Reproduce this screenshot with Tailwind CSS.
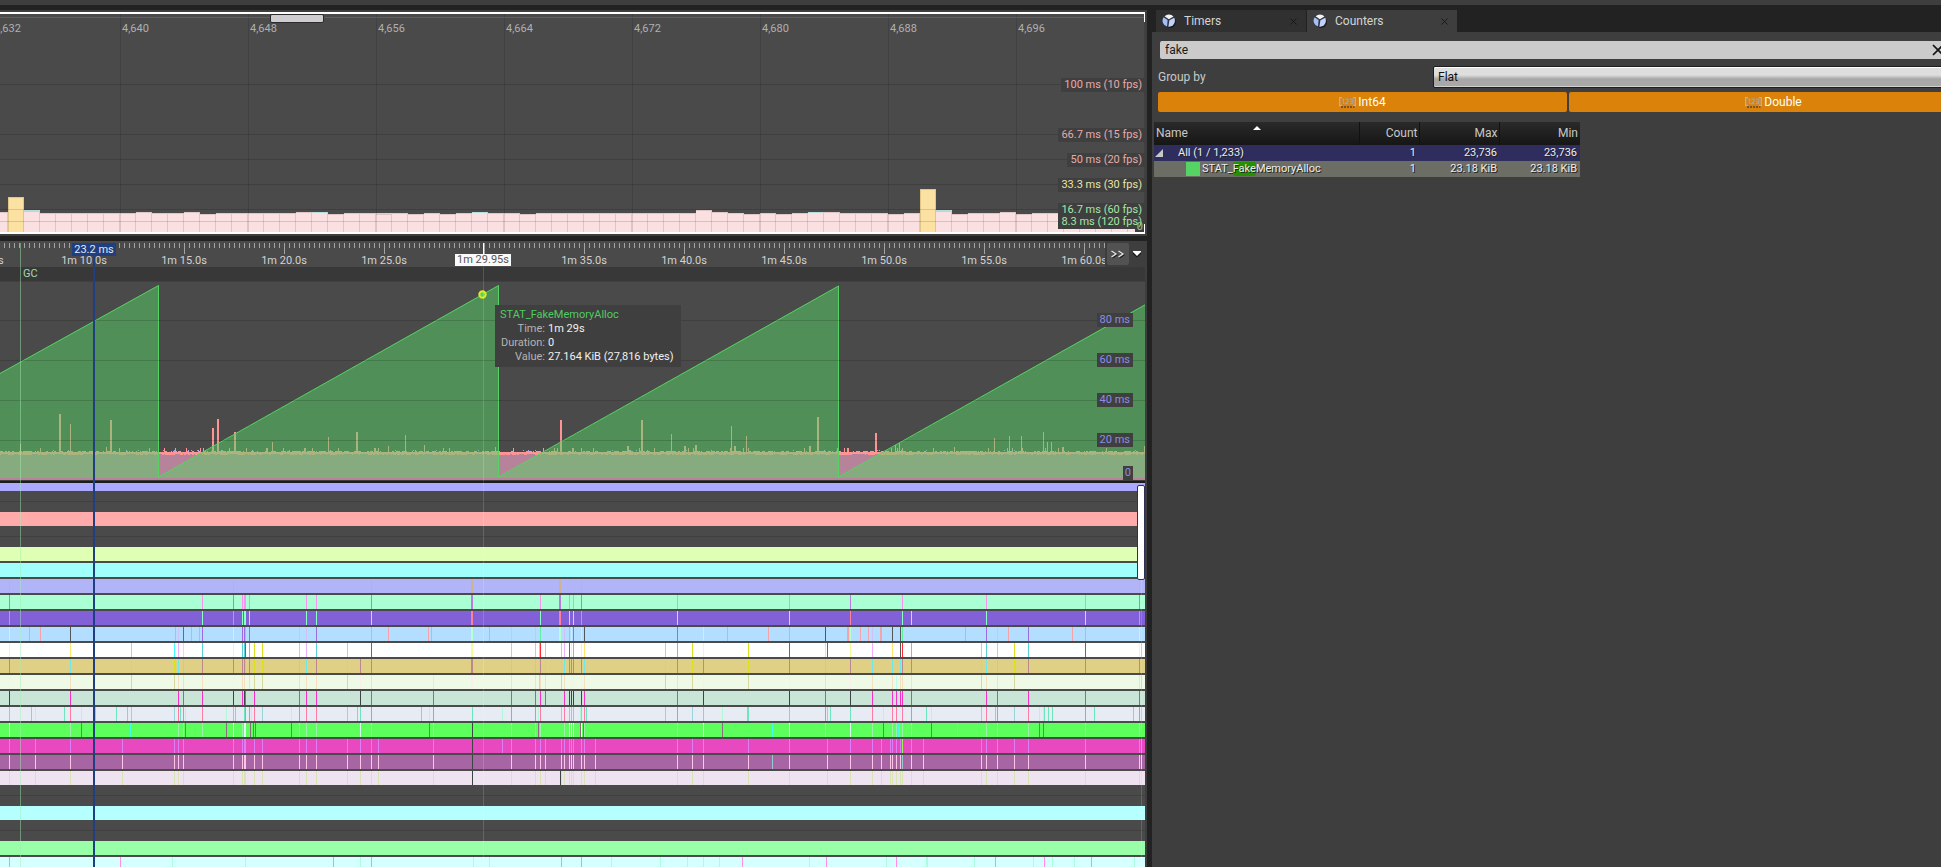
<!DOCTYPE html>
<html lang="en">
<head>
<meta charset="utf-8">
<title>Timing Insights</title>
<script src="https://cdn.jsdelivr.net/npm/@tailwindcss/browser@4"></script>
</head>
<body class="h-screen overflow-hidden bg-[#3e3e3e] font-[Roboto,'Liberation_Sans',sans-serif] text-[11px] leading-[14px] text-[#c8c8c8]">
<div class="flex h-full flex-col">
  <div class="h-[5px] shrink-0"></div>
  <div class="h-[5px] shrink-0 bg-[#222222]"></div>
  <div class="grid min-h-0 flex-1 grid-cols-[1147fr_5px_789fr]">

    <main class="flex min-w-0 flex-col overflow-hidden pr-[2px]">
      <section aria-label="Frames" class="relative mt-[2px] h-[222px] shrink-0 overflow-hidden border-y-2 border-white bg-[#4a4a4a]">
        <svg id="frames" class="absolute inset-0 h-full w-full" shape-rendering="crispEdges"></svg>
        <div class="absolute left-[270px] top-0 h-[9px] w-[54px] rounded-[2px] border border-[#2c2c2c] bg-[#cfcdd0]"></div>
        <div class="-ml-[6px] flex pt-[8px] text-[#b0b0b0]">
          <span class="w-32 shrink-0">4,632</span><span class="w-32 shrink-0">4,640</span><span class="w-32 shrink-0">4,648</span><span class="w-32 shrink-0">4,656</span><span class="w-32 shrink-0">4,664</span><span class="w-32 shrink-0">4,672</span><span class="w-32 shrink-0">4,680</span><span class="w-32 shrink-0">4,688</span><span class="w-32 shrink-0">4,696</span>
        </div>
        <i class="absolute bottom-0 right-0 h-[10px] w-[10px] bg-[#3f3f3f]"></i>
        <span class="absolute right-0 top-[64px] bg-[#3f3f3f] px-[3px] text-[#e8aaaa]">100 ms (10 fps)</span>
        <span class="absolute right-0 top-[114px] bg-[#3f3f3f] px-[3px] text-[#e8aaaa]">66.7 ms (15 fps)</span>
        <span class="absolute right-0 top-[139px] bg-[#3f3f3f] px-[3px] text-[#e8aaaa]">50 ms (20 fps)</span>
        <span class="absolute right-0 top-[164px] bg-[#3f3f3f] px-[3px] text-[#e6e6a6]">33.3 ms (30 fps)</span>
        <span class="absolute right-0 top-[189px] bg-[#3f3f3f] px-[3px] text-[#a6e6a6]">16.7 ms (60 fps)</span>
        <span class="absolute right-0 top-[201px] bg-[#3f3f3f] px-[3px] text-[#a6e6a6]">8.3 ms (120 fps)</span>
        <span class="absolute bottom-0 right-0 px-[2px] leading-[10px] text-[#90c890]">0</span>
        <i class="absolute right-0 top-0 h-[8px] w-px bg-white"></i>
        <i class="absolute bottom-0 right-0 h-[8px] w-px bg-white"></i>
      </section>
      <div class="mt-[2px] -mr-[2px] h-[5px] shrink-0 bg-[#222222]"></div>

      <section aria-label="Timing" class="relative flex min-h-0 flex-1 flex-col overflow-hidden bg-[#4a4a4a]">
        <div class="relative h-[26px] shrink-0">
          <svg id="ruler" class="absolute inset-0 h-full w-full" shape-rendering="crispEdges"></svg>
          <div class="-ml-[66px] flex pt-[13px] text-center leading-[13px] text-[#d2d2d2]">
            <span class="w-[100px] shrink-0">1m 5.0s</span><span class="w-[100px] shrink-0">1m 10.0s</span><span class="w-[100px] shrink-0">1m 15.0s</span><span class="w-[100px] shrink-0">1m 20.0s</span><span class="w-[100px] shrink-0">1m 25.0s</span><span class="w-[100px] shrink-0"></span><span class="w-[100px] shrink-0">1m 35.0s</span><span class="w-[100px] shrink-0">1m 40.0s</span><span class="w-[100px] shrink-0">1m 45.0s</span><span class="w-[100px] shrink-0">1m 50.0s</span><span class="w-[100px] shrink-0">1m 55.0s</span><span class="w-[100px] shrink-0">1m 60.0s</span>
          </div>
          <div class="absolute inset-y-0 right-0 flex w-[40px] items-start gap-[3px] bg-[#3e3e3e] pl-[2px] pt-[2px]">
            <button aria-label="Auto-scroll" class="flex h-[22px] w-[22px] items-center justify-center rounded-[2px] bg-[#525252]">
              <svg width="14" height="9" fill="none"><path d="M1.500 2 6 5 1.500 8M8.500 2 13 5 8.500 8" stroke="#1c1c1c" stroke-width="1.200"/><path d="M.5 1 5 4 .5 7M7.500 1 12 4 7.500 7" stroke="#e8e8e8" stroke-width="1.300"/></svg>
            </button>
            <button aria-label="View options" class="flex h-[22px] items-center">
              <svg width="10" height="8"><path d="M1 2h8v2L5 7.500 1 4z" fill="#181818"/><path d="M1 1h8v1L5 6 1 2z" fill="#fff"/></svg>
            </button>
          </div>
        </div>
        <div class="h-[15px] shrink-0 border-b border-[#404040] bg-[#383838] pl-[23px] text-[#a0dca8]">GC</div>
        <div class="relative h-[199px] shrink-0 border-b border-[#3e3e3e]">
          <svg id="graph" class="absolute inset-0 h-full w-full"></svg>
          <span class="absolute right-[12px] top-[31px] bg-[#3f3f3f] px-[3px] text-[#8c8ce6]">80 ms</span>
          <span class="absolute right-[12px] top-[71px] bg-[#3f3f3f] px-[3px] text-[#8c8ce6]">60 ms</span>
          <span class="absolute right-[12px] top-[111px] bg-[#3f3f3f] px-[3px] text-[#8c8ce6]">40 ms</span>
          <span class="absolute right-[12px] top-[151px] bg-[#3f3f3f] px-[3px] text-[#8c8ce6]">20 ms</span>
          <span class="absolute right-[12px] top-[184px] bg-[#3f3f3f] px-[2px] text-[#8c8ce6]">0</span>
        </div>
        <div class="h-[2px] shrink-0 bg-[#1c1c1c]"></div>
        <div id="tracks" class="min-h-0 flex-1 overflow-hidden"></div>

        <i class="absolute bottom-0 left-[20px] top-[2px] w-px bg-[#a0f0b0]/45"></i>
        <i class="absolute bottom-0 left-[483px] top-[26px] w-px bg-white/15"></i>
        <i class="absolute bottom-0 left-[1141px] top-[338px] w-px bg-white/15"></i>
        <i class="absolute left-[483px] top-[2px] h-[12px] w-px bg-white"></i>
        <i class="absolute bottom-0 left-[93px] top-[15px] w-[2px] bg-[#1f3f80]"></i>
        <span class="absolute left-[72px] top-[2px] w-[44px] bg-[#1f3f80] text-center leading-[13px] text-[#e4e8f4]">23.2 ms</span>
        <span class="absolute left-[455px] top-[13px] w-[56px] bg-[#fafafa] text-center leading-[12px] text-[#555]">1m 29.95s</span>
        <div class="absolute right-0 top-[244px] h-[95px] w-[8px] rounded-[2px] border border-[#303050] bg-white"></div>

        <div role="tooltip" class="absolute left-[495px] top-[64px] bg-[#3f3f3f] px-[5px] py-[3px] pr-[7px] text-[#f0f0f0]">
          <div class="text-[#50cc60]">STAT_FakeMemoryAlloc</div>
          <dl class="grid grid-cols-[45px_auto] gap-x-[3px]">
            <dt class="text-right text-[#b4b4b4]">Time:</dt><dd>1m 29s</dd>
            <dt class="text-right text-[#b4b4b4]">Duration:</dt><dd>0</dd>
            <dt class="text-right text-[#b4b4b4]">Value:</dt><dd>27.164 KiB (27,816 bytes)</dd>
          </dl>
        </div>
      </section>
    </main>

    <div class="bg-[#222222]"></div>

    <aside class="flex min-w-0 flex-col overflow-hidden text-[12px]">
      <div role="tablist" class="flex h-[22px] shrink-0 gap-px bg-[#222222] pl-[4px] text-[#d4d4d4] [text-shadow:1px_1px_0_#111]">
        <div class="flex w-[150px] items-center bg-[#303030] pl-[6px] pr-[9px]">
          <button role="tab" class="flex flex-1 items-center gap-[8px] text-left"><svg width="14" height="14" viewBox="0 0 14 14"><use href="#pie"/></svg>Timers</button>
          <button aria-label="Close Timers"><svg width="7" height="7" stroke="#181818"><path d="M.5.500 6.500 6.500M6.500.500.500 6.500"/></svg></button>
        </div>
        <div class="flex w-[150px] items-center bg-[#3e3e3e] pl-[6px] pr-[9px]">
          <button role="tab" aria-selected="true" class="flex flex-1 items-center gap-[8px] text-left"><svg width="14" height="14" viewBox="0 0 14 14"><use href="#pie"/></svg>Counters</button>
          <button aria-label="Close Counters"><svg width="7" height="7" stroke="#181818"><path d="M.5.500 6.500 6.500M6.500.500.500 6.500"/></svg></button>
        </div>
      </div>
      <!-- The filter controls keep a little more width than the window shows. -->
      <div class="-mr-[37px] flex shrink-0 flex-col pl-[6px] pt-[9px]">
        <div class="relative ml-[2px] h-[18px]">
          <input type="text" aria-label="Search counters" value="fake" class="block h-full w-full rounded-[2px] bg-[#cbcbcb] px-[5px] text-[12px] text-[#1a1a1a] outline-none">
          <button aria-label="Clear search" class="absolute right-[34px] top-[3px]"><svg width="12" height="12" stroke="#111" stroke-width="1.700"><path d="M1 1 11 11M11 1 1 11"/></svg></button>
        </div>
        <div class="mt-[7px] flex h-[22px] items-center">
          <label for="group" class="w-[275px] shrink-0">Group by</label>
          <select id="group" class="h-[22px] min-w-0 flex-1 appearance-none rounded-[2px] border border-[#1e1e1e] bg-linear-to-b from-[#dedede] from-40% to-[#a8a8a8] to-60% px-[4px] text-[12px] leading-[16px] text-[#111] shadow-[inset_0_1px_0_#fff,inset_0_-1px_0_#d0d0d0]"><option>Flat</option></select>
        </div>
        <div class="mt-[4px] grid h-[20px] grid-cols-2 gap-[2px] text-white [text-shadow:1px_1px_0_#3a2400]">
          <button class="flex items-center justify-center gap-[2px] rounded-[2px] bg-[#da820a]"><svg width="17" height="11" viewBox="0 0 17 11"><use href="#num"/></svg>Int64</button>
          <button class="flex items-center justify-center gap-[2px] rounded-[2px] bg-[#da820a]"><svg width="17" height="11" viewBox="0 0 17 11"><use href="#num"/></svg>Double</button>
        </div>
      </div>
      <table class="ml-[2px] mt-[10px] w-[426px] table-fixed border-collapse text-right text-[11px] text-[#ececec]">
        <colgroup><col class="w-[205px]"><col class="w-[60px]"><col class="w-[80px]"><col class="w-[81px]"></colgroup>
        <thead class="h-[23px] bg-linear-to-b from-[#2a2a2a] to-[#161616] text-[12px] leading-[14px] text-[#c8c8c8]">
          <tr>
            <th scope="col" class="relative border-r border-[#111] p-0 pb-[2px] pl-[2px] text-left font-normal">Name<svg class="absolute left-[99px] top-[4px]" width="8" height="4"><path d="M0 4 4 0 8 4z" fill="#fff"/></svg></th>
            <th scope="col" class="border-r border-[#111] p-0 pb-[2px] pr-px font-normal">Count</th>
            <th scope="col" class="border-r border-[#111] p-0 pb-[2px] pr-px font-normal">Max</th>
            <th scope="col" class="p-0 pb-[2px] pr-[2px] font-normal">Min</th>
          </tr>
        </thead>
        <tbody class="leading-[14px] [text-shadow:1px_1px_0_#222]">
          <tr class="h-[16px] bg-[#2e2d5e]">
            <td class="p-0 text-left"><span class="flex items-center gap-[15px] pl-px"><svg width="8" height="8"><path d="M8 0v8H0z" fill="#c8c8c8"/></svg>All (1 / 1,233)</span></td>
            <td class="p-0 pr-[3px]">1</td><td class="p-0 pr-[2px]">23,736</td><td class="p-0 pr-[3px]">23,736</td>
          </tr>
          <tr class="h-[16px] bg-[#6c6d65]">
            <td class="p-0 text-left"><span class="flex items-center pl-[32px]"><i class="mr-[2px] h-[14px] w-[14px] bg-[#56d463]"></i>STAT_<mark class="rounded-[2px] bg-[#259000] text-[#ececec]">Fake</mark>MemoryAlloc</span></td>
            <td class="p-0 pr-[3px]">1</td><td class="p-0 pr-[2px]">23.18 KiB</td><td class="p-0 pr-[3px]">23.18 KiB</td>
          </tr>
        </tbody>
      </table>
    </aside>
  </div>
</div>

<svg class="hidden">
  <symbol id="pie" viewBox="0 0 14 14">
    <ellipse cx="8" cy="8" rx="6" ry="6" fill="#1c1c1c"/>
    <circle cx="6.500" cy="6.500" r="6.500" fill="#2c3446"/>
    <path d="M6.800 5.200 2.600 2.200A6.300 6.300 0 0 1 11.500 2.600z" fill="#f4f4f0"/>
    <path d="M5.600 6 1.600 3.200A6.200 6.200 0 0 0 5 12.600z" fill="#a9bdf0"/>
    <path d="M7.400 6.300 12.200 3.800A6.200 6.200 0 0 1 6.400 12.800z" fill="#c3d2fa"/>
  </symbol>
  <symbol id="num" viewBox="0 0 17 11">
    <g fill="none" stroke="#b4b0b4" stroke-width="1.300"><path d="M3 .7H.7v7.800H3M14 .7h2.300v7.800H14"/><path d="M3 3 4.500 2V7M6.200 2.200H9v2.300L6.500 6.700H9.300M11 2.200h2.700V6.700H11M11 4.500h2.500" stroke="#b0a094"/></g>
    <path d="M2 10H15.500" stroke="#5b4528" stroke-width="1.400" stroke-dasharray="2 1"/>
  </symbol>
</svg>

<script>
const rect = (x, y, w, h, c) => `<rect x="${x}" y="${y}" width="${w}" height="${h}" fill="${c}"/>`;
const byId = id => document.getElementById(id);

// Frame durations: tops of the bars, 16px apart
const tops = {0:198,1:183,2:197,9:198,12:198,19:198,20:198,30:198,44:196,45:198,51:198,52:198,58:175,59:197,63:198};
const low = [13,21,24,26,28,33,47,49,56,60,64], cyan = [2,20,24,30,42,46,51,59];
let s = '';
for (let i = 0; i < 150; i++) {
  const x = -8 + i * 16;
  const yellow = i === 1 || i === 58;
  const top = low.includes(i) ? 200 : (tops[i] || 199);
  s += rect(x, top, 16, 218 - top, yellow ? '#dfc587' : '#dfc5c5');
  s += rect(x + (yellow ? 1 : 0), top + 1, yellow ? 14 : 15, 217 - top, yellow ? '#fbe2a2' : '#fae0e0');
  if (cyan.includes(i)) s += rect(x, i === 24 || i === 2 || i === 59 ? top - 1 : top, 16, 1, '#b9dcdc');
}
for (const y of [70, 120, 145, 170, 195, 207]) s += rect(0, y, '100%', 1, 'rgba(0,0,0,.14)');
for (let x = 120; x < 2400; x += 128) s += rect(x, 0, 1, 218, 'rgba(0,0,0,.12)');
s += rect(0, 3, '100%', 1, '#5e5e5e');
byId('frames').innerHTML = s;

// Time ruler
s = '';
for (let x = 4; x < 2400; x += 5) s += rect(x, 2, 1, x % 100 === 84 ? 11 : 5, '#a4a4a4');
byId('ruler').innerHTML = s;

// Counter graph
let seed = 7;
const rnd = () => (seed = seed * 16807 % 2147483647) / 2147483647;
s = '<g shape-rendering="crispEdges">' + rect(0, 172, '100%', 26, '#b6839b') + rect(0, 170, '100%', 2, '#ff9494');
for (let x = 0; x < 1145; x++) {
  if (rnd() < .3) s += rect(x, 169, 1 + (rnd() * 3 | 0), 1, '#ff9494');
  if (rnd() < .3) s += rect(x, 172, 1 + (rnd() * 3 | 0), 1, '#ff9494');
  if (rnd() < .04) s += rect(x, 166, 1, 4, '#ff9494');
  if (rnd() < .03) s += rect(x, 168, 1, 1, '#aaa4ff');
}
const spikes = [[20,444],[59,414,2],[70,424],[106,447],[110,420,2],[212,428,2],[217,419,2],[234,432,2],[272,442],[304,448,2],[328,437],[356,432,2],[388,446],[405,435],[424,445],[495,447],[560,420,2],[627,446,2],[641,420,2],[671,434],[684,446,2],[695,445,2],[731,426],[734,446,2],[743,448],[746,436],[809,446,2],[817,417,2],[875,433,2],[895,445],[899,443],[954,447],[994,438],[1009,436],[1021,436],[1043,432],[1047,442],[1051,442],[1062,447,2],[1144,446]];
for (const [x, y, w = 1] of spikes) s += rect(x, y - 282, w, 454 - y, '#ff9494');
s += '</g>';
for (const p of ['-1,92 158.5,3.500 158.5,195.500 -1,195.500', '158.5,195.500 498.5,3.500 498.5,195.500', '498.5,195.500 838.5,4 838.5,195.500', '838.5,195.500 1178.5,4 1178.5,195.500'])
  s += `<polygon points="${p}" fill="#55d463" fill-opacity=".5" shape-rendering="crispEdges"/>`;
s += '<polyline points="-1,92 158.5,3.500 158.5,195 498.5,3.500 498.5,195 838.5,4 838.5,195 1178.5,4" fill="none" stroke="#55d463"/>';
for (const y of [38, 78, 118, 158]) s += `<rect y="${y}" width="100%" height="1" fill="rgba(0,0,0,.14)"/>`;
s += '<circle cx="482.5" cy="12.500" r="3.200" fill="#55d463" stroke="#e6e61e" stroke-width="2"/>';
byId('graph').innerHTML = s;

// Thread tracks: [height, colour, events {colour: positions}]; a negative position is two pixels wide
const D = '#3c4444';
const common = [9,35,70,122,174,178,183,233,242,-244,254,262,299,306,316,347,360,371,378,433,511,535,540,545,561,564,569,571,573,581,584,595,677,692,703,748,789,827,850,872,881,890,892,896,900,911,923,981,986,997,1014,1028,1085,1139,1141];
const tracks = [
  [8, '#abaaff'], [-21], [14, '#ffabab'], [-21], [14, '#deffb4'], [2], [14, '#a1fffb'], [2],
  [14, '#b1b4f7', {'#cfb295': [9,233,371,-471,-559,581,1139]}], [2],
  [14, '#aaffd4', {'#b97ce0': [9,233,371,-471,-559,581,850,1139], '#fb92ef': [202,242,-244,249,306,316,540,569,573,677,789,902,986,1085]}], [2],
  [14, '#8261d8', {'#ff7f9b': [9,233,-471,-559,581,850,1139], '#8affc0': [202,242,-244,249,306,316,371,540,569,573,677,789,902,911,986,1085]}], [2],
  [14, '#b3deff', {'#f5a3aa': [29,40,175,191,199,388,428,431,489,727,768,-847,860,868,-880,965,1008,1072], '#555555': [70,584,825,892,900], '#8c5c6c': [183], '#d0c0fa': [178,299,306,511,535,564,872,997], '#9a6ee0': [202,242,244,249,316,573,677,986,1028], '#b8ffd0': [9,233,-471,-559,571,581,703,850,1139], '#5cf0a0': [245,371,540,569,789,902,1085]}], [2],
  [14, '#ffffff', {'#f0ff9a': [9,233,-471,571,581,703,850,1139], '#ffe570': [70,183,584,825,892], '#dbe020': [131,254,262,347,539,545,561,665,692,748,981,1014], '#40ffff': [174,1141], '#f0b0ff': [178,299,306,511,535,564,872,997], '#5cd0d8': [202,242,244,249,316,573,677,911,986,1028], '#ff2a30': [245,371,540,569,789,827,902,1085], '#555555': [900]}], [2],
  [14, '#e0d086', {'#dbe020': [131,-174,254,-262,347,539,545,561,665,692,748,981,-1014,1141], '#bb8890': [9,202,233,242,244,249,316,360,371,-471,540,569,571,573,581,677,703,789,850,902,911,1028,1085,1139], '#70e8e8': [70,178,183,245,299,306,511,535,564,584,825,872,892,900,986,997]}], [2],
  [14, '#effae6', {'#f3e0c0': [70,178,183,202,242,244,249,299,306,316,371,511,535,540,545,564,584,677,825,872,892,900,902,911,986,997,1139], '#d6d8a0': [131,174,254,262,347,539,561,665,692,748,981,1014,1141], '#b8fff0': [433,896], '#fceeea': [9,233,360,-471,571,573,581,703,789,850]}], [2],
  [14, '#c9e5d8', {[D]: [9,233,244,360,569,571,573,581,703,789,850], '#f52fc8': [70,178,183,202,242,245,254,299,306,316,371,433,511,535,540,545,564,584,677,825,872,892,896,900,902,911,986,997,1028,1085,1139]}], [2],
  [14, '#e7ebf3', {'#b0f8d8': [35,81,185,226,251,291,429,502,538,580,722,883,931,1039,1043], '#70e4bc': [9,31,64,95,116,127,180,233,235,244,357,360,421,472,569,571,573,581,586,703,-747,789,830,850,926,995,1044,1048,1052,1094,1133], '#ff7aa4': [70,178,183,202,245,249,254,299,306,316,371,433,511,535,540,564,584,677,825,872,892,896,902,911,986,997,1028,1085,1139], '#9ad4da': [131,174,262,347,561,665,692,827,981,1014,1141]}], [2],
  [14, '#5cff5c', {'#9cf0ac': [70,178,183,202,242,299,306,316,371,433,511,535,540,564,584,677,825,872,892,896,902,911,986,997,1028,1085,1139], '#8f6a80': [81,185,226,250,253,255,291,429,538,580,583,722,883,931,1039,1043], '#40ffe8': [130,772,-898,957], '#d8fff0': [9,233,-244,360,569,571,573,581,703,789,850], [D]: [472]}], [2],
  [14, '#e849c0', {'#e07cf5': [...common, 502], [D]: [472], '#9cf060': [902]}], [2],
  [14, '#a765a3', {'#ffc4e8': common, [D]: [472], '#98c8d0': [772,902]}], [2],
  [14, '#efe3f2', {'#d8e4b4': [...common, 902], [D]: [472,560]}],
  [-21], [14, '#b6ffff'], [-21], [14, '#98ffa8'], [2],
  [14, '#d6ffff', {'#a8ffd8': [172,245,360,473,489,611,660,687,703,719,809,886,-926,974,1033,1052,1074,1134], '#ff8af0': [9,120,333,371,561,581,742,826,896,995,1044,1091]}],
];
let html = '';
for (const [h, c, ev] of tracks) {
  if (h === -21) { html += '<div class="h-[21px] pt-[10px]"><div class="h-px bg-[#404040]"></div></div>'; continue; }
  if (!c) { html += '<div class="h-[2px]"></div>'; continue; }
  let r = '';
  for (const k in ev || {}) for (const x of ev[k]) r += rect(Math.abs(x), 0, x < 0 ? 2 : 1, 14, k);
  html += `<svg class="block w-full" height="${h}" style="background:${c}" shape-rendering="crispEdges">${r}</svg>`;
}
byId('tracks').innerHTML = html;
</script>
</body>
</html>
